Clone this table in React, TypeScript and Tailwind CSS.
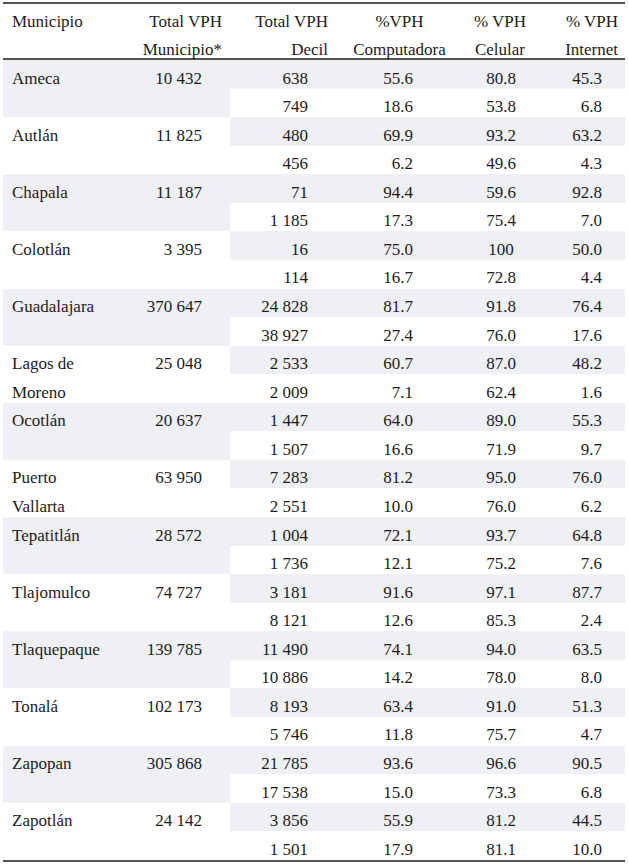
import React from "react";

type Fila = [string, string, string, string];

type Municipio = {
  nombre: string[];
  total: string;
  filas: [Fila, Fila];
};

const municipios: Municipio[] = [
  { nombre: ["Ameca"], total: "10 432", filas: [["638", "55.6", "80.8", "45.3"], ["749", "18.6", "53.8", "6.8"]] },
  { nombre: ["Autlán"], total: "11 825", filas: [["480", "69.9", "93.2", "63.2"], ["456", "6.2", "49.6", "4.3"]] },
  { nombre: ["Chapala"], total: "11 187", filas: [["71", "94.4", "59.6", "92.8"], ["1 185", "17.3", "75.4", "7.0"]] },
  { nombre: ["Colotlán"], total: "3 395", filas: [["16", "75.0", "100", "50.0"], ["114", "16.7", "72.8", "4.4"]] },
  { nombre: ["Guadalajara"], total: "370 647", filas: [["24 828", "81.7", "91.8", "76.4"], ["38 927", "27.4", "76.0", "17.6"]] },
  { nombre: ["Lagos de", "Moreno"], total: "25 048", filas: [["2 533", "60.7", "87.0", "48.2"], ["2 009", "7.1", "62.4", "1.6"]] },
  { nombre: ["Ocotlán"], total: "20 637", filas: [["1 447", "64.0", "89.0", "55.3"], ["1 507", "16.6", "71.9", "9.7"]] },
  { nombre: ["Puerto", "Vallarta"], total: "63 950", filas: [["7 283", "81.2", "95.0", "76.0"], ["2 551", "10.0", "76.0", "6.2"]] },
  { nombre: ["Tepatitlán"], total: "28 572", filas: [["1 004", "72.1", "93.7", "64.8"], ["1 736", "12.1", "75.2", "7.6"]] },
  { nombre: ["Tlajomulco"], total: "74 727", filas: [["3 181", "91.6", "97.1", "87.7"], ["8 121", "12.6", "85.3", "2.4"]] },
  { nombre: ["Tlaquepaque"], total: "139 785", filas: [["11 490", "74.1", "94.0", "63.5"], ["10 886", "14.2", "78.0", "8.0"]] },
  { nombre: ["Tonalá"], total: "102 173", filas: [["8 193", "63.4", "91.0", "51.3"], ["5 746", "11.8", "75.7", "4.7"]] },
  { nombre: ["Zapopan"], total: "305 868", filas: [["21 785", "93.6", "96.6", "90.5"], ["17 538", "15.0", "73.3", "6.8"]] },
  { nombre: ["Zapotlán"], total: "24 142", filas: [["3 856", "55.9", "81.2", "44.5"], ["1 501", "17.9", "81.1", "10.0"]] },
];

function FilaDatos({ fila, gris }: { fila: Fila; gris: boolean }) {
  return (
    <div className={`flex h-[28.57px] pt-[7.5px] leading-[21px] ${gris ? "bg-[#eef0f3]" : ""}`}>
      <div className="w-[105px] pr-[27px] text-right">{fila[0]}</div>
      <div className="w-[125px] pr-[47px] text-right">{fila[1]}</div>
      <div className="w-[85px] pr-[3px] text-center">{fila[2]}</div>
      <div className="w-[80px] pr-[23px] text-right">{fila[3]}</div>
    </div>
  );
}

function Bloque({ m, i }: { m: Municipio; i: number }) {
  return (
    <div className="flex">
      <div className={`w-[227px] ${i % 2 === 0 ? "bg-[#eef0f3]" : ""}`}>
        <div className="flex h-[28.57px] pt-[7.5px] leading-[21px]">
          <div className="w-[127px] pl-[9px]">{m.nombre[0]}</div>
          <div className="w-[100px] pr-[28px] text-right">{m.total}</div>
        </div>
        <div className="flex h-[28.57px] pt-[7.5px] leading-[21px]">
          <div className="w-[127px] pl-[9px]">{m.nombre[1] ?? ""}</div>
        </div>
      </div>
      <div className="w-[395px]">
        <FilaDatos fila={m.filas[0]} gris />
        <FilaDatos fila={m.filas[1]} gris={false} />
      </div>
    </div>
  );
}

export default function App() {
  return (
    <div className="h-[867px] w-[628px] bg-white pt-[2px] pl-[3px] text-[17px] text-[#1c1c1c] font-['Liberation_Serif',serif]">
      <div className="w-[622px] border-t-2 border-b-2 border-[#555555]">
        <div className="flex h-[56px] border-b-2 border-[#555555] pt-[4px] leading-[28px]">
          <div className="w-[127px] pl-[9px]">Municipio</div>
          <div className="w-[100px] pr-[8px] text-right">
            <div>Total VPH</div>
            <div>Municipio*</div>
          </div>
          <div className="w-[105px] pr-[7px] text-right">
            <div>Total VPH</div>
            <div>Decil</div>
          </div>
          <div className="w-[125px] pl-[4px] text-center">
            <div>%VPH</div>
            <div>Computadora</div>
          </div>
          <div className="w-[85px] pr-[5px] text-center">
            <div>% VPH</div>
            <div>Celular</div>
          </div>
          <div className="w-[80px] pr-[7px] text-right">
            <div>% VPH</div>
            <div>Internet</div>
          </div>
        </div>
        {municipios.map((m, i) => (
          <Bloque key={m.total} m={m} i={i} />
        ))}
      </div>
    </div>
  );
}
